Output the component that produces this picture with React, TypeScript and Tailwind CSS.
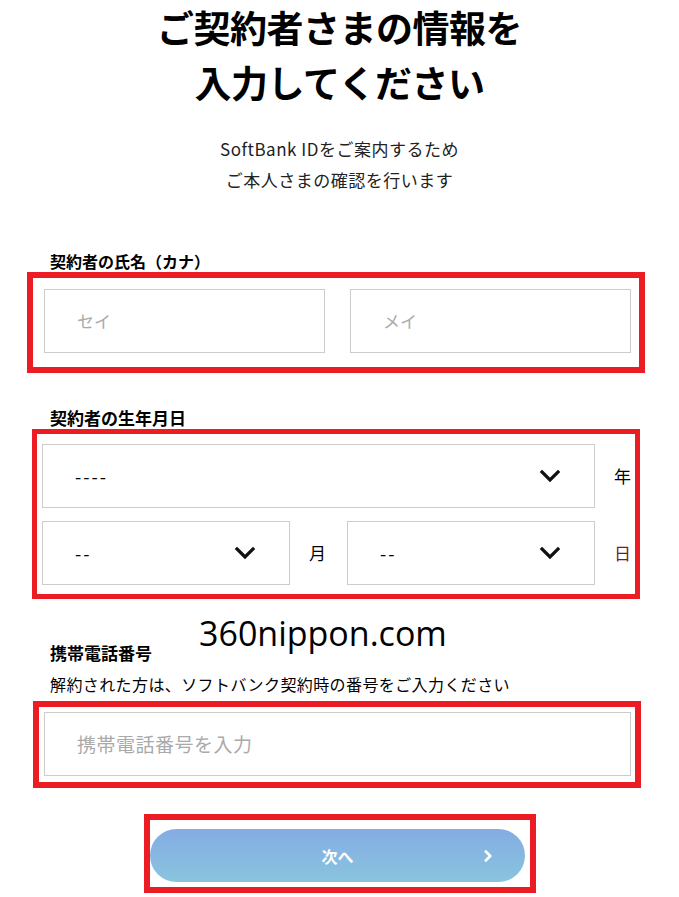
import { ChevronRight } from "lucide-react";

const font = { fontFamily: '"Noto Sans CJK JP", "Noto Sans", sans-serif' };

function Chevron() {
  return (
    <svg width="22" height="14" viewBox="0 0 22 14" className="shrink-0">
      <path d="M3 3 L11 11 L19 3" fill="none" stroke="#111" strokeWidth="3.2" strokeLinecap="square" />
    </svg>
  );
}

function Select({ value, className }: { value: string; className: string }) {
  return (
    <div className={`h-[64px] border border-[#cccccc] bg-white flex items-center justify-between pl-[32px] pr-[33px] ${className}`}>
      <span className="text-[18px] text-black tracking-[2px]">{value}</span>
      <Chevron />
    </div>
  );
}

export default function App() {
  return (
    <div className="relative w-[679px] h-[897px] bg-white overflow-hidden text-black" style={font}>
      {/* Title */}
      <h1 className="text-center text-[37px] font-bold leading-[55px] tracking-[-0.5px]">
        ご契約者さまの情報を
        <br />
        入力してください
      </h1>

      <p className="mt-[23px] text-center text-[17px] leading-[31px] tracking-[0.5px] text-[#222]">
        SoftBank IDをご案内するため
        <br />
        ご本人さまの確認を行います
      </p>

      {/* Name */}
      <div className="mt-[55px] pl-[50px] text-[16px] font-bold leading-[22px]">契約者の氏名（カナ）</div>
      <div className="ml-[27px] w-[618px] border-[6px] border-[#ec1c24] pt-[11px] pb-[14px] pl-[11px] pr-[8px] flex gap-[25px]">
        <div className="w-[281px] h-[64px] border border-[#cccccc] flex items-center pl-[32px] text-[17px] text-[#aaaaaa]">セイ</div>
        <div className="w-[281px] h-[64px] border border-[#cccccc] flex items-center pl-[32px] text-[17px] text-[#aaaaaa]">メイ</div>
      </div>

      {/* Birthday */}
      <div className="mt-[34px] pl-[50px] text-[17px] font-bold leading-[22px]">契約者の生年月日</div>
      <div className="ml-[32px] w-[608px] border-[5px] border-[#ec1c24] pt-[10px] pb-[9px] pl-[5px] flex flex-col gap-[13px]">
        <div className="flex items-center">
          <Select value="----" className="w-[553px]" />
          <span className="ml-[19px] text-[17px]">年</span>
        </div>
        <div className="flex items-center">
          <Select value="--" className="w-[248px]" />
          <span className="ml-[19px] text-[17px]">月</span>
          <Select value="--" className="ml-[21px] w-[248px]" />
          <span className="ml-[19px] text-[17px] text-[#7a1c1c]">日</span>
        </div>
      </div>

      {/* Phone */}
      <div className="mt-[43px] pl-[50px] text-[17px] font-bold leading-[22px]">携帯電話番号</div>
      <div className="mt-[10px] pl-[50px] text-[16px] leading-[21px] tracking-[0.4px]">解約された方は、ソフトバンク契約時の番号をご入力ください</div>
      <div className="mt-[6px] ml-[33px] w-[608px] border-[6px] border-[#ec1c24] pt-[5px] pb-[6px] pl-[5px] pr-[4px]">
        <div className="w-[587px] h-[64px] border border-[#cccccc] flex items-center pl-[32px] text-[19px] tracking-[0.5px] text-[#aaaaaa]">
          携帯電話番号を入力
        </div>
      </div>

      {/* Next button */}
      <div className="mt-[26px] ml-[144px] w-[392px] border-[6px] border-[#ec1c24] pt-[9px] pb-[5px] pr-[5px]">
        <button className="relative w-[375px] h-[53px] rounded-full bg-gradient-to-b from-[#84ace3] to-[#89c4de] flex items-center justify-center text-white text-[16px] font-bold">
          次へ
          <ChevronRight className="absolute right-[28px] top-1/2 -translate-y-1/2" size={18} strokeWidth={3.5} />
        </button>
      </div>

      {/* Watermark */}
      <div
        className="absolute left-[199px] top-[613px] text-[34px] leading-[40px] text-black"
        style={{ fontFamily: '"Open Sans", sans-serif' }}
      >
        360nippon.com
      </div>
    </div>
  );
}
